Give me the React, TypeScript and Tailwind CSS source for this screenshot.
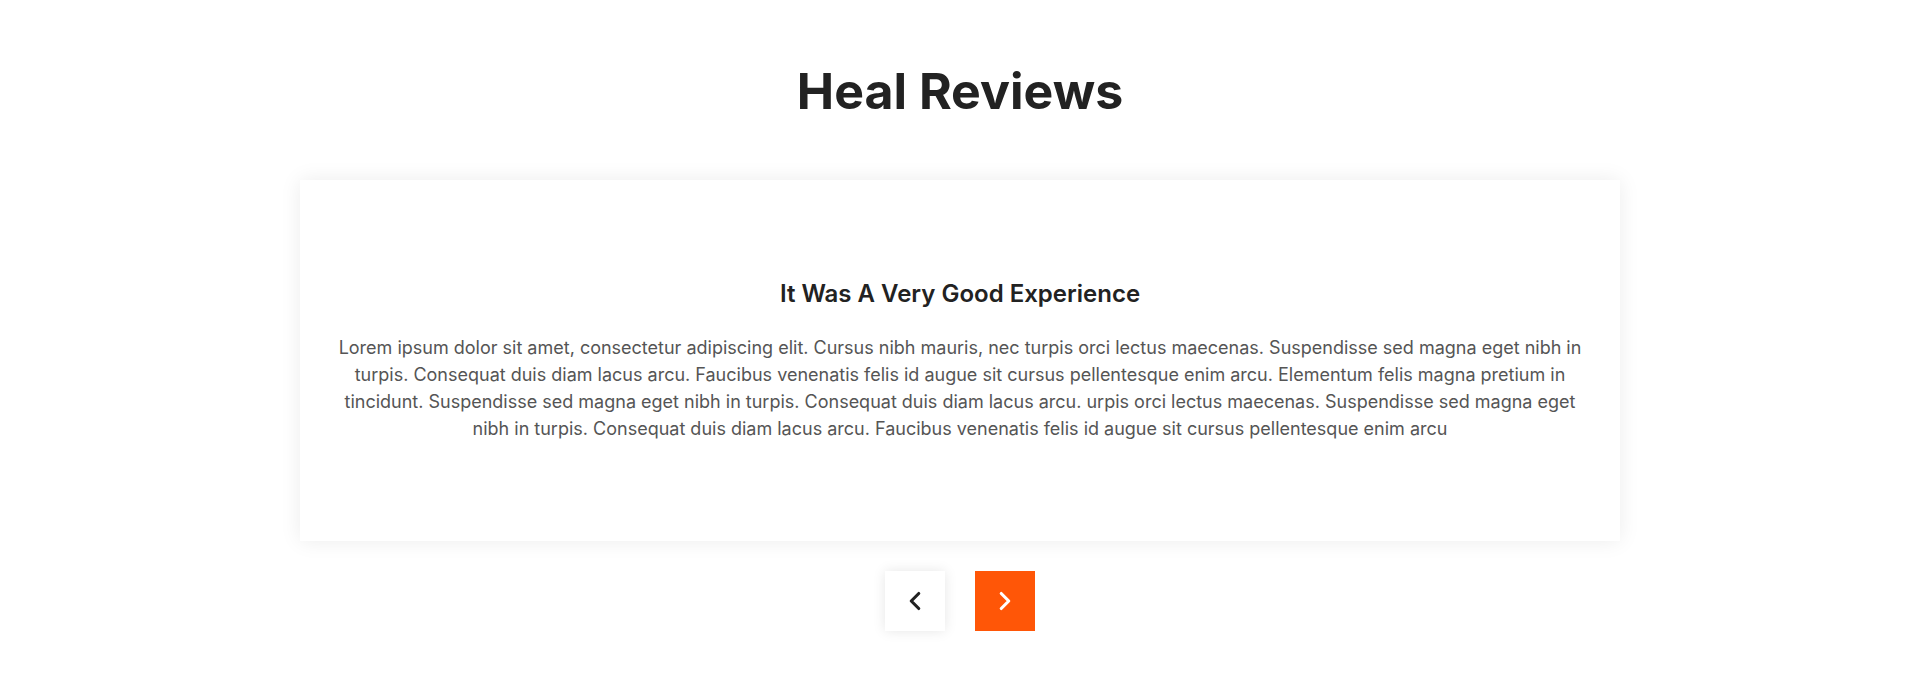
import { ChevronLeft, ChevronRight } from "lucide-react";

function App() {
  return (
    <div className="bg-white pt-[62px] pb-[60px] font-['Inter',sans-serif]">
      <h2 className="text-[50px] leading-[58px] font-bold text-center text-[#222222]">Heal Reviews</h2>

      <div className="mx-auto mt-[60px] w-[1320px] bg-white shadow-[0_0_20px_rgba(0,0,0,0.08)] px-[36px] pt-[98px] pb-[99px] text-center">
        <h3 className="text-[24px] leading-[32px] font-semibold text-[#222222]">It Was A Very Good Experience</h3>
        <p className="mt-[24px] text-[18px] leading-[27px] text-[#555555]">
          Lorem ipsum dolor sit amet, consectetur adipiscing elit. Cursus nibh mauris, nec turpis orci lectus maecenas. Suspendisse sed magna eget nibh in turpis. Consequat duis diam lacus arcu. Faucibus venenatis felis id augue sit cursus pellentesque enim arcu. Elementum felis magna pretium in tincidunt. Suspendisse sed magna eget nibh in turpis. Consequat duis diam lacus arcu. urpis orci lectus maecenas. Suspendisse sed magna eget nibh in turpis. Consequat duis diam lacus arcu. Faucibus venenatis felis id augue sit cursus pellentesque enim arcu
        </p>
      </div>

      <div className="flex justify-center gap-[30px] mt-[30px]">
        <button className="w-[60px] h-[60px] bg-white shadow-[0_0_12px_rgba(0,0,0,0.1)] flex items-center justify-center text-[#222222]">
          <ChevronLeft size={30} strokeWidth={2.5} />
        </button>
        <button className="w-[60px] h-[60px] bg-[#ff5607] flex items-center justify-center text-white">
          <ChevronRight size={30} strokeWidth={2.5} />
        </button>
      </div>
    </div>
  );
}

export default App;
